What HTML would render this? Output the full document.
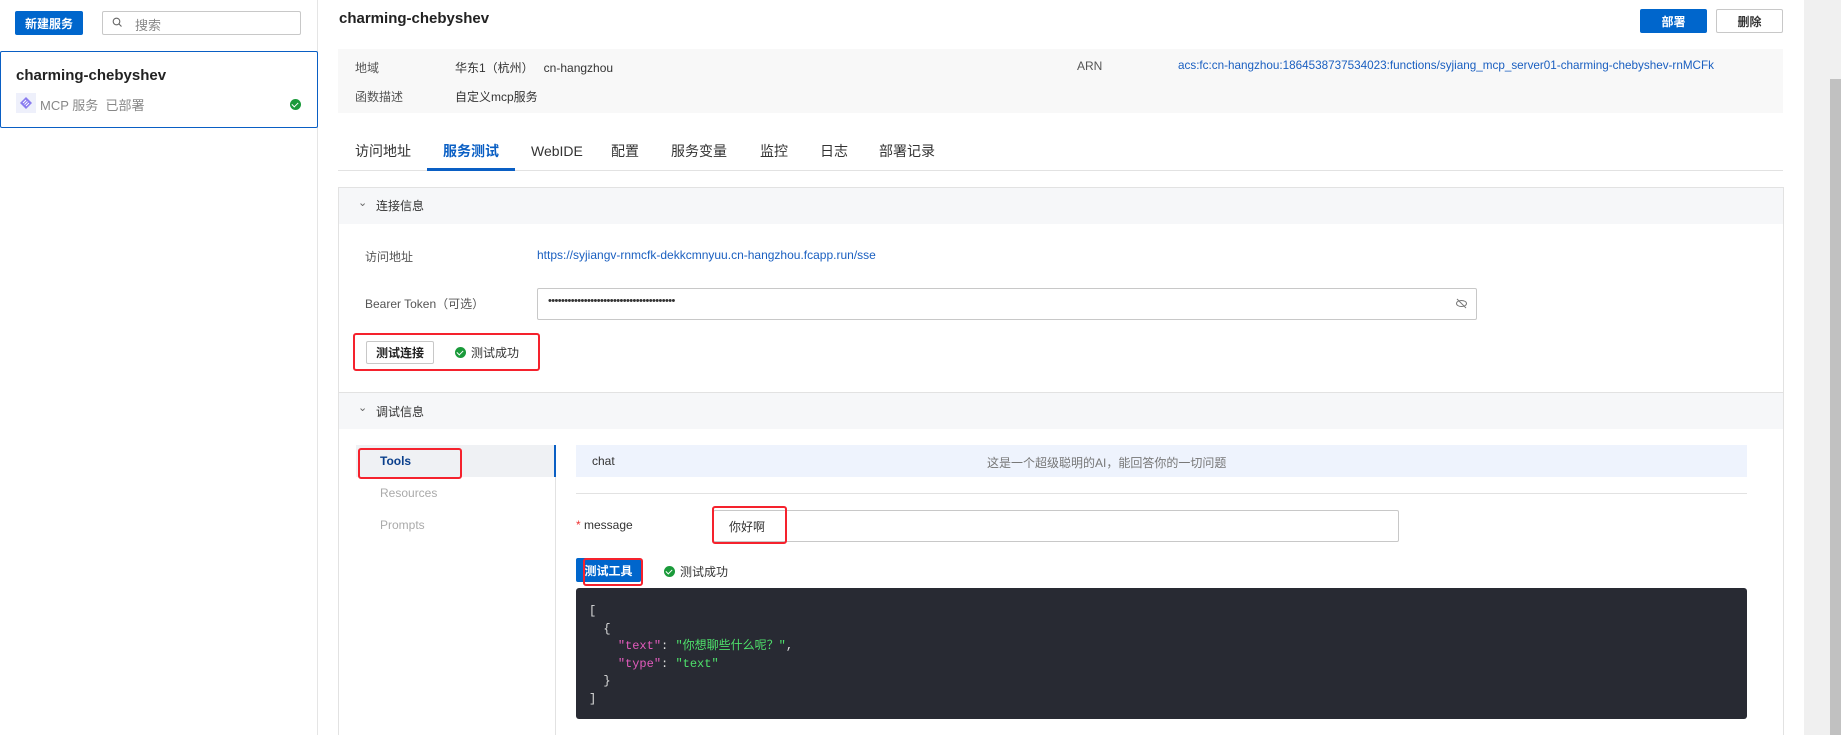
<!DOCTYPE html>
<html style="overflow:hidden;width:1841px;height:735px"><head><meta charset="utf-8">
<style>
*{box-sizing:border-box;margin:0;padding:0}
body{width:1841px;height:735px;overflow:hidden;background:#fff;font-family:"Liberation Sans","Noto Sans CJK SC",sans-serif;font-size:12px;color:#333;position:relative}
.a{position:absolute;white-space:nowrap}
.btnp{background:#0066cc;color:#fff;font-weight:bold;display:flex;align-items:center;justify-content:center;border-radius:2px}
.red{position:absolute;border:2px solid #f5222d;border-radius:3px}
.ok{display:inline-block;width:11px;height:11px;border-radius:50%;background:#1a9a3a;position:relative;vertical-align:-1px;margin-right:5px}
.ok:after{content:"";position:absolute;left:3px;top:2px;width:3px;height:5px;border:solid #fff;border-width:0 1.5px 1.5px 0;transform:rotate(45deg)}
.mono{font-family:"Liberation Mono","Noto Sans CJK SC",monospace;font-size:12px;color:#ddd}
.k{color:#e35bbd}.s{color:#4ee06b}
.t{font-size:14px}
</style></head><body>
<!-- sidebar -->
<div class="a" style="left:317px;top:0;width:1px;height:735px;background:#e5e5e5"></div>
<div class="a btnp" style="left:15px;top:11px;width:68px;height:24px;font-size:12px">新建服务</div>
<div class="a" style="left:102px;top:11px;width:199px;height:24px;border:1px solid #c8c8c8;border-radius:2px"></div>
<svg class="a" style="left:112px;top:17px" width="11" height="11" viewBox="0 0 11 11"><circle cx="4.5" cy="4.5" r="3.3" fill="none" stroke="#666" stroke-width="1.1"/><line x1="7" y1="7" x2="9.5" y2="9.5" stroke="#666" stroke-width="1.1"/></svg>
<div class="a" style="left:135px;top:15px;color:#888;font-size:13px">搜索</div>
<div class="a" style="left:0;top:51px;width:318px;height:77px;border:1px solid #0a5fc4;border-radius:2px"></div>
<div class="a" style="left:16px;top:67px;font-size:15px;font-weight:bold;color:#222">charming-chebyshev</div>
<div class="a" style="left:16px;top:93px;width:20px;height:20px;background:#eef0fb"></div>
<svg class="a" style="left:19px;top:96px" width="14" height="14" viewBox="0 0 14 14"><path d="M7 1L13 7L7 13L1 7Z" fill="#8a7cf0"/><path d="M4 7L7 4M5.5 8.5L8.5 5.5M7 10L10 7" stroke="#fff" stroke-width="0.9"/></svg>
<div class="a" style="left:40px;top:95px;color:#888;font-size:13px">MCP 服务&nbsp;&nbsp;已部署</div>
<div class="a" style="left:290px;top:98px"><span class="ok"></span></div>
<!-- header -->
<div class="a" style="left:339px;top:10px;font-size:15px;font-weight:bold;color:#222">charming-chebyshev</div>
<div class="a btnp" style="left:1640px;top:9px;width:67px;height:24px">部署</div>
<div class="a" style="left:1716px;top:9px;width:67px;height:24px;border:1px solid #c8c8c8;border-radius:2px;display:flex;align-items:center;justify-content:center;font-weight:bold;color:#333">删除</div>
<!-- scrollbar -->
<div class="a" style="left:1804px;top:0;width:37px;height:735px;background:#f0f0f0"></div>
<div class="a" style="left:1830px;top:79px;width:11px;height:656px;background:#c1c1c1"></div>
<!-- info -->
<div class="a" style="left:338px;top:49px;width:1445px;height:64px;background:#f8f8f8"></div>
<div class="a" style="left:355px;top:59px;color:#555">地域</div>
<div class="a" style="left:455px;top:59px;color:#333">华东1（杭州）&nbsp;&nbsp;&nbsp;cn-hangzhou</div>
<div class="a" style="left:355px;top:88px;color:#555">函数描述</div>
<div class="a" style="left:455px;top:88px;color:#333">自定义mcp服务</div>
<div class="a" style="left:1077px;top:59px;color:#555">ARN</div>
<div class="a" style="left:1178px;top:59px;color:#1a5fc0;font-size:11.7px">acs:fc:cn-hangzhou:1864538737534023:functions/syjiang_mcp_server01-charming-chebyshev-rnMCFk</div>
<!-- tabs -->
<div class="a" style="left:338px;top:170px;width:1445px;height:1px;background:#e2e2e2"></div>
<div class="a t" style="left:355px;top:141px">访问地址</div>
<div class="a t" style="left:443px;top:141px;color:#0a5fc4;font-weight:bold">服务测试</div>
<div class="a" style="left:427px;top:168px;width:88px;height:3px;background:#0a5fc4"></div>
<div class="a t" style="left:531px;top:143px">WebIDE</div>
<div class="a t" style="left:611px;top:141px">配置</div>
<div class="a t" style="left:671px;top:141px">服务变量</div>
<div class="a t" style="left:760px;top:141px">监控</div>
<div class="a t" style="left:820px;top:141px">日志</div>
<div class="a t" style="left:879px;top:141px">部署记录</div>
<!-- panel -->
<div class="a" style="left:338px;top:187px;width:1446px;height:548px;border:1px solid #e2e2e2;border-bottom:none"></div>
<div class="a" style="left:339px;top:188px;width:1444px;height:36px;background:#f6f7f9"></div>
<div class="a" style="left:358px;top:196px;color:#666;font-size:11px">⌄</div>
<div class="a" style="left:376px;top:197px;color:#333">连接信息</div>
<div class="a" style="left:365px;top:248px;color:#555">访问地址</div>
<div class="a" style="left:537px;top:248px;color:#1a5fc0">https://syjiangv-rnmcfk-dekkcmnyuu.cn-hangzhou.fcapp.run/sse</div>
<div class="a" style="left:365px;top:295px;color:#555">Bearer Token（可选）</div>
<div class="a" style="left:537px;top:288px;width:940px;height:32px;border:1px solid #c8c8c8;border-radius:2px"></div>
<div class="a" style="left:548px;top:295px;font-size:11px;letter-spacing:-0.6px;color:#333">•••••••••••••••••••••••••••••••••••••••</div>
<svg class="a" style="left:1455px;top:297px" width="13" height="13" viewBox="0 0 13 13"><ellipse cx="6.5" cy="6.5" rx="5" ry="3" fill="none" stroke="#777"/><line x1="2" y1="2" x2="11" y2="11" stroke="#777"/></svg>
<div class="a" style="left:366px;top:341px;width:68px;height:23px;border:1px solid #c8c8c8;border-radius:2px;display:flex;align-items:center;justify-content:center;font-weight:bold;font-size:12px;color:#222">测试连接</div>
<div class="a" style="left:455px;top:344px"><span class="ok"></span>测试成功</div>
<div class="red" style="left:353px;top:333px;width:187px;height:38px"></div>
<div class="a" style="left:339px;top:392px;width:1444px;height:1px;background:#e2e2e2"></div>
<div class="a" style="left:339px;top:393px;width:1444px;height:36px;background:#f6f7f9"></div>
<div class="a" style="left:358px;top:401px;color:#666;font-size:11px">⌄</div>
<div class="a" style="left:376px;top:403px;color:#333">调试信息</div>
<!-- left menu -->
<div class="a" style="left:356px;top:445px;width:198px;height:32px;background:#eff1f4"></div>
<div class="a" style="left:554px;top:445px;width:2px;height:32px;background:#0a5fc4"></div>
<div class="a" style="left:555px;top:477px;width:1px;height:258px;background:#e2e2e2"></div>
<div class="a" style="left:380px;top:454px;font-weight:bold;color:#0a3f8c">Tools</div>
<div class="red" style="left:358px;top:448px;width:104px;height:31px"></div>
<div class="a" style="left:380px;top:486px;color:#aaa">Resources</div>
<div class="a" style="left:380px;top:518px;color:#aaa">Prompts</div>
<!-- right -->
<div class="a" style="left:576px;top:445px;width:1171px;height:32px;background:#eef3fd"></div>
<div class="a" style="left:592px;top:454px;color:#333">chat</div>
<div class="a" style="left:987px;top:454px;color:#777">这是一个超级聪明的AI，能回答你的一切问题</div>
<div class="a" style="left:576px;top:493px;width:1171px;height:1px;background:#e2e2e2"></div>
<div class="a" style="left:576px;top:518px;color:#333"><span style="color:#e33">*</span> message</div>
<div class="a" style="left:713px;top:510px;width:686px;height:32px;border:1px solid #c8c8c8;border-radius:2px"></div>
<div class="a" style="left:729px;top:518px;color:#333">你好啊</div>
<div class="red" style="left:712px;top:506px;width:75px;height:38px"></div>
<div class="a btnp" style="left:576px;top:558px;width:65px;height:24px;font-size:12px">测试工具</div>
<div class="red" style="left:583px;top:558px;width:60px;height:28px"></div>
<div class="a" style="left:664px;top:563px"><span class="ok"></span>测试成功</div>
<div class="a" style="left:576px;top:588px;width:1171px;height:131px;background:#282a33;border-radius:3px"></div>
<div class="a mono" style="left:589px;top:603px;line-height:17.5px;white-space:pre">[
  {
    <span class="k">"text"</span>: <span class="s">"你想聊些什么呢？"</span>,
    <span class="k">"type"</span>: <span class="s">"text"</span>
  }
]</div>
</body></html>
